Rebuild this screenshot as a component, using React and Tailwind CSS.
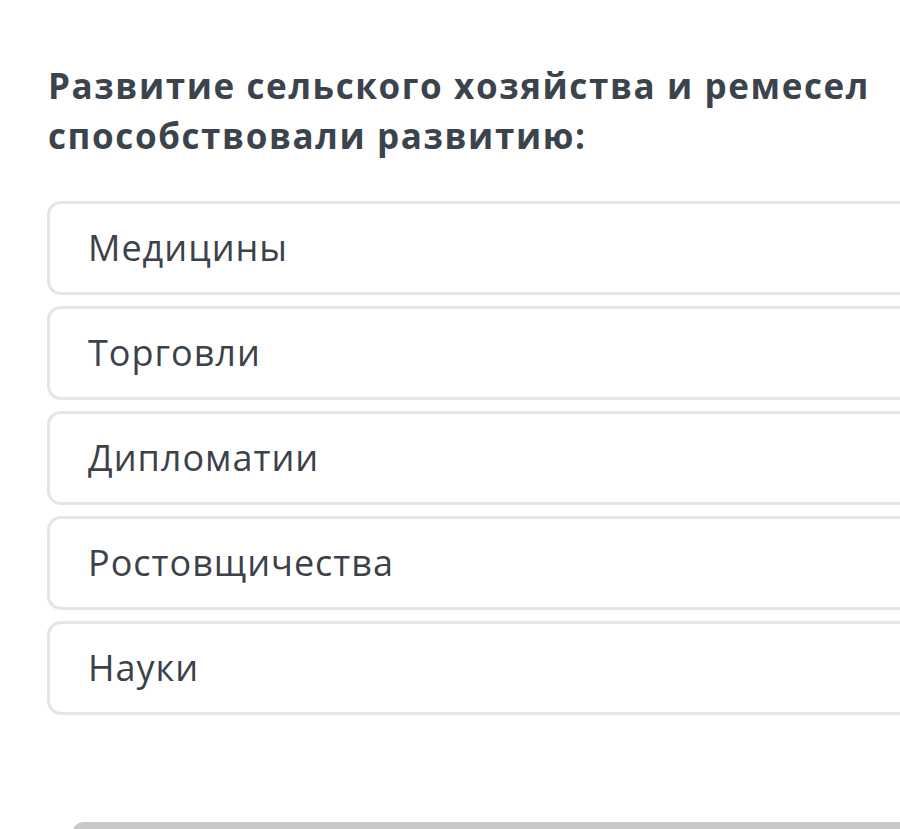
export default function App() {
  const options = ["Медицины", "Торговли", "Дипломатии", "Ростовщичества", "Науки"];
  return (
    <div className="w-[900px] h-[829px] overflow-hidden bg-white relative" style={{ fontFamily: '"Open Sans", "Noto Sans", sans-serif' }}>
      <div className="pl-[47px] pt-[61px]">
        <h1 className="pl-[1px] text-[35px] leading-[50px] font-bold tracking-[1.6px] text-[#3b434d] whitespace-nowrap">
          Развитие сельского хозяйства и ремесел
          <br />
          способствовали развитию:
        </h1>
        <div className="mt-[40px] flex flex-col gap-[11px] w-[900px]">
          {options.map((o) => (
            <div key={o} className="h-[94px] border-[3px] border-[#e3e5e6] rounded-[14px] flex items-center pl-[38px] text-[36px] tracking-[1px] text-[#3c4249]">
              {o}
            </div>
          ))}
        </div>
      </div>
      <div className="absolute left-[73px] top-[822px] w-[900px] h-[20px] bg-[#c8c8c8] rounded-tl-[10px]" />
    </div>
  );
}
